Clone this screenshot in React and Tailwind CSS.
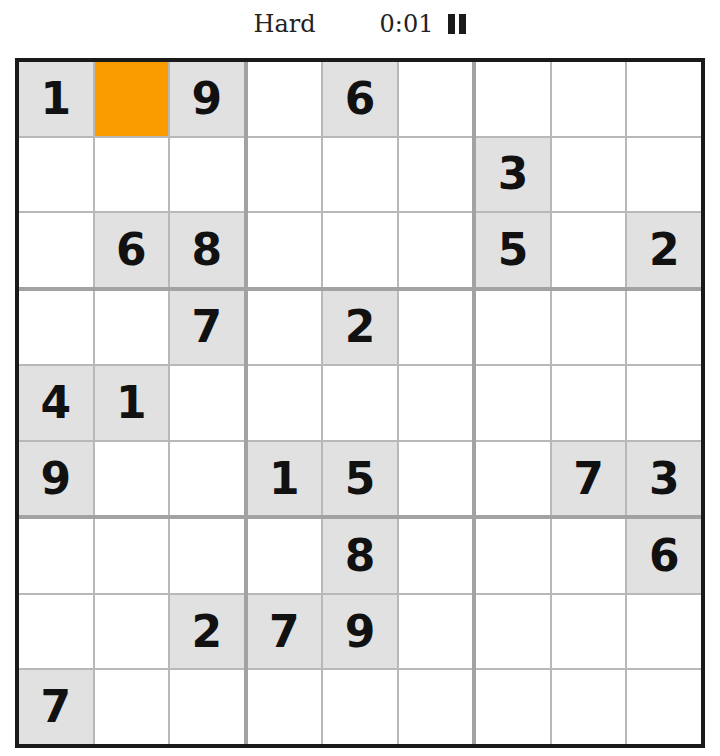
import React from "react";

// 0 = empty, -1 = selected cell
const puzzle = [
  [1, -1, 9, 0, 6, 0, 0, 0, 0],
  [0, 0, 0, 0, 0, 0, 3, 0, 0],
  [0, 6, 8, 0, 0, 0, 5, 0, 2],
  [0, 0, 7, 0, 2, 0, 0, 0, 0],
  [4, 1, 0, 0, 0, 0, 0, 0, 0],
  [9, 0, 0, 1, 5, 0, 0, 7, 3],
  [0, 0, 0, 0, 8, 0, 0, 0, 6],
  [0, 0, 2, 7, 9, 0, 0, 0, 0],
  [7, 0, 0, 0, 0, 0, 0, 0, 0],
];

function Cell({ value }) {
  if (value === -1) return <div className="bg-[#fa9c00]" />;
  if (value === 0) return <div className="bg-white" />;
  return (
    <div className="bg-[#e1e1e1] flex items-center justify-center text-[44px] font-bold text-[#111] leading-none [font-family:'DejaVu_Sans',sans-serif]">
      {value}
    </div>
  );
}

export default function App() {
  const boxes = [0, 1, 2, 3, 4, 5, 6, 7, 8];

  return (
    <div className="w-[720px] h-[756px] bg-white overflow-hidden">
      {/* Header */}
      <div className="h-[47px] flex items-center justify-center text-[24px] text-[#222] [font-family:'DejaVu_Serif',serif]">
        <span className="mr-[64px]">Hard</span>
        <span>0:01</span>
        <span className="ml-[15px] flex gap-[4px]">
          <span className="w-[7px] h-[20px] bg-[#1a1a1a]" />
          <span className="w-[7px] h-[20px] bg-[#1a1a1a]" />
        </span>
      </div>

      {/* Board */}
      <div className="mt-[11px] mx-auto w-[690px] h-[690px] border-4 border-[#1a1a1a] bg-[#a2a2a2] grid grid-cols-3 grid-rows-3 gap-[4px]">
        {boxes.map((b) => {
          const br = Math.floor(b / 3) * 3;
          const bc = (b % 3) * 3;
          return (
            <div key={b} className="grid grid-cols-3 grid-rows-3 gap-[2px] bg-[#b8b8b8]">
              {[0, 1, 2].flatMap((r) =>
                [0, 1, 2].map((c) => (
                  <Cell key={`${r}-${c}`} value={puzzle[br + r][bc + c]} />
                ))
              )}
            </div>
          );
        })}
      </div>
    </div>
  );
}
